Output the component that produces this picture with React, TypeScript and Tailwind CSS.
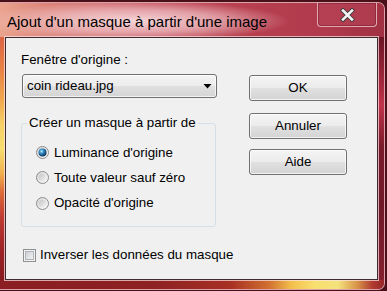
import React from "react";

function Radio({ checked, id }: { checked?: boolean; id: string }) {
  return (
    <svg width="13" height="13" viewBox="0 0 13 13" className="shrink-0">
      <defs>
        <linearGradient id={`ro-${id}`} x1="0" y1="0" x2="1" y2="1">
          <stop offset="0" stopColor="#d6d6d6" />
          <stop offset="1" stopColor="#fbfbfb" />
        </linearGradient>
        <linearGradient id={`ri-${id}`} x1="0" y1="0" x2="1" y2="1">
          <stop offset="0" stopColor="#c4c4c4" />
          <stop offset="1" stopColor="#f4f4f4" />
        </linearGradient>
        <radialGradient id={`rs-${id}`} cx="0.38" cy="0.35" r="0.7">
          <stop offset="0" stopColor="#b8ecff" />
          <stop offset="0.35" stopColor="#3c93c8" />
          <stop offset="0.75" stopColor="#155082" />
          <stop offset="1" stopColor="#0b2d4c" />
        </radialGradient>
      </defs>
      <circle cx="6.5" cy="6.5" r="6" fill={`url(#ro-${id})`} stroke="#8a8a8a" strokeWidth="1" />
      {checked ? (
        <circle cx="6.5" cy="6.5" r="4" fill={`url(#rs-${id})`} />
      ) : (
        <circle cx="6.5" cy="6.5" r="3.8" fill={`url(#ri-${id})`} />
      )}
    </svg>
  );
}

function Checkbox() {
  return (
    <svg width="13" height="13" viewBox="0 0 13 13" className="shrink-0">
      <defs>
        <linearGradient id="cbg" x1="0" y1="0" x2="1" y2="1">
          <stop offset="0" stopColor="#c9ccd1" />
          <stop offset="1" stopColor="#f6f6f6" />
        </linearGradient>
      </defs>
      <rect x="0.5" y="0.5" width="12" height="12" fill="#f4f4f4" stroke="#8e8f8f" />
      <rect x="2.5" y="2.5" width="8" height="8" fill="url(#cbg)" stroke="#aeb3b9" />
    </svg>
  );
}

const btn =
  "w-[98px] h-[26px] rounded-[3px] border border-[#707070] bg-[linear-gradient(180deg,#f4f4f4_0%,#ececec_48%,#e0e0e0_52%,#d4d4d4_100%)] shadow-[inset_0_0_0_1px_rgba(255,255,255,0.7)] flex items-center justify-center";

export default function App() {
  return (
    <div className="w-[387px] h-[291px] overflow-hidden bg-[#4a1018] font-['Liberation_Sans','Arial',sans-serif]">
      <div className="mt-[2px] w-[385px] h-[288px] rounded-tr-[7px] rounded-br-[7px] border-t border-r border-b border-[#dba2ac] flex flex-col overflow-hidden bg-[#b03a4c]">
        {/* title bar */}
        <div className="h-[34px] shrink-0 flex items-start justify-between bg-[radial-gradient(ellipse_155px_20px_at_135px_18px,rgba(250,226,228,0.9)_0%,rgba(242,200,204,0.65)_55%,rgba(240,200,200,0)_100%),linear-gradient(90deg,#eaa48e_0%,#dc8479_12%,#c85a66_38%,#b8404f_62%,#b03a4c_85%,#a03042_100%)]">
          <div className="pl-[7px] pt-[10px] text-[15px] leading-[17px] text-black whitespace-nowrap">
            Ajout d'un masque à partir d'une image
          </div>
          <div className="mr-[7px] w-[60px] h-[24px] rounded-b-[4px] border border-t-0 border-[#e2a9b2] bg-[rgba(196,78,98,0.35)] shadow-[inset_0_0_0_1px_rgba(90,10,30,0.35)] flex items-center justify-center">
            <svg width="15" height="14" viewBox="0 0 15 14">
              <path d="M3 2.5 L12 11.5 M12 2.5 L3 11.5" stroke="#3a3a3a" strokeWidth="4.4" strokeLinecap="square" />
              <path d="M3 2.5 L12 11.5 M12 2.5 L3 11.5" stroke="#f4f4f4" strokeWidth="2.6" strokeLinecap="square" />
            </svg>
          </div>
        </div>

        {/* middle row */}
        <div className="h-[243px] shrink-0 flex">
          <div className="w-[5px] bg-[linear-gradient(180deg,#dc6444_0%,#e88446_14%,#f0a84e_26%,#f6d066_36%,#f7dc70_46%,#f0b04e_56%,#dc6a3a_64%,#c03c32_74%,#9c2226_88%,#861c20_100%)]" />
          <div className="relative z-10 w-[373px] border border-[#3d2b2f] bg-[#f0f0f0] shadow-[0_0_0_1px_rgba(255,230,232,0.7)] flex text-[13.33px] leading-[16px] text-black">
            <div className="ml-[15px] w-[196px] pt-[14px] flex flex-col items-start">
              <div className="whitespace-nowrap">Fenêtre d'origine :</div>
              <div className="mt-[6px] ml-[1px] w-[195px] h-[24px] rounded-[3px] border border-[#707070] bg-[linear-gradient(180deg,#f4f4f4_0%,#ececec_48%,#e0e0e0_52%,#d4d4d4_100%)] shadow-[inset_0_0_0_1px_rgba(255,255,255,0.7)] flex items-center justify-between pl-[4px] pr-[4px]">
                <span className="whitespace-nowrap">coin rideau.jpg</span>
                <svg width="9" height="5" viewBox="0 0 9 5">
                  <polygon points="0.5,0 8.5,0 4.5,4.5" fill="#000" />
                </svg>
              </div>
              <fieldset className="mt-[17px] w-[195px] border border-[#d5dfe5] rounded-[3px] px-[5px] pt-[9px] pb-[10px]">
                <legend className="px-[2px] whitespace-nowrap">Créer un masque à partir de</legend>
                <div className="flex flex-col pl-[9px]">
                  <div className="h-[25px] flex items-center gap-[5px]">
                    <Radio checked id="a" />
                    <span className="whitespace-nowrap">Luminance d'origine</span>
                  </div>
                  <div className="h-[25px] flex items-center gap-[5px]">
                    <Radio id="b" />
                    <span className="whitespace-nowrap">Toute valeur sauf zéro</span>
                  </div>
                  <div className="h-[26px] flex items-center gap-[5px]">
                    <Radio id="c" />
                    <span className="whitespace-nowrap">Opacité d'origine</span>
                  </div>
                </div>
              </fieldset>
              <div className="mt-[20px] ml-[2px] h-[16px] flex items-center gap-[4px]">
                <Checkbox />
                <span className="whitespace-nowrap">Inverser les données du masque</span>
              </div>
            </div>
            <div className="ml-[32px] pt-[37px] flex flex-col">
              <div className={btn}>OK</div>
              <div className={`${btn} mt-[12px]`}>Annuler</div>
              <div className={`${btn} mt-[10px]`}>Aide</div>
            </div>
          </div>
          <div className="w-[6px] bg-[linear-gradient(180deg,#6a1525_0%,#a8283e_20%,#c2344c_28%,#7a1a2a_45%,#701828_70%,#842030_100%)]" />
        </div>

        {/* bottom strip */}
        <div className="flex-1 bg-[linear-gradient(90deg,#8a1e22_0%,#8c2222_40%,#a83024_60%,#d07030_70%,#f3c04c_76%,#f8e070_82%,#f4e27c_88%,#d89448_93%,#b03a30_97%,#982628_100%)]" />
      </div>
    </div>
  );
}
